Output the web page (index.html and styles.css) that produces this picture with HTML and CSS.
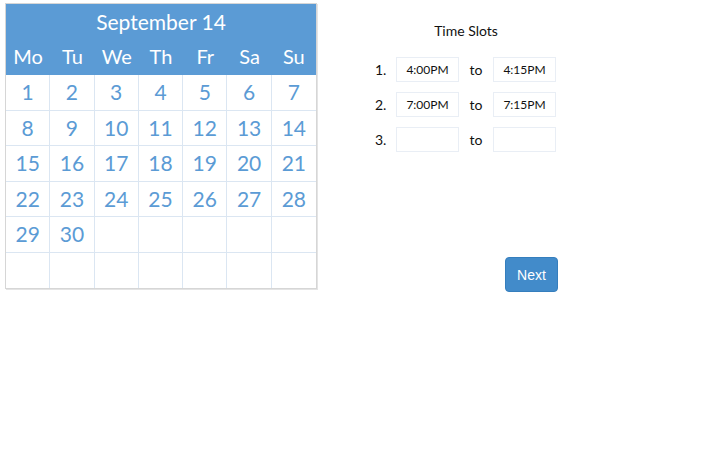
FILE: index.html
```html
<!DOCTYPE html>
<html>
<head>
<meta charset="utf-8">
<link rel="stylesheet" href="styles.css">
</head>
<body>
<div class="page">
  <div class="calendar">
    <div class="cal-head">
      <div class="cal-title">September 14</div>
      <div class="cal-days">
        <span>Mo</span><span>Tu</span><span>We</span><span>Th</span><span>Fr</span><span>Sa</span><span>Su</span>
      </div>
    </div>
    <div class="cal-grid">
      <div class="cell">1</div><div class="cell">2</div><div class="cell">3</div><div class="cell">4</div><div class="cell">5</div><div class="cell">6</div><div class="cell">7</div>
      <div class="cell">8</div><div class="cell">9</div><div class="cell">10</div><div class="cell">11</div><div class="cell">12</div><div class="cell">13</div><div class="cell">14</div>
      <div class="cell">15</div><div class="cell">16</div><div class="cell">17</div><div class="cell">18</div><div class="cell">19</div><div class="cell">20</div><div class="cell">21</div>
      <div class="cell">22</div><div class="cell">23</div><div class="cell">24</div><div class="cell">25</div><div class="cell">26</div><div class="cell">27</div><div class="cell">28</div>
      <div class="cell">29</div><div class="cell">30</div><div class="cell"></div><div class="cell"></div><div class="cell"></div><div class="cell"></div><div class="cell"></div>
      <div class="cell last"></div><div class="cell last"></div><div class="cell last"></div><div class="cell last"></div><div class="cell last"></div><div class="cell last"></div><div class="cell last"></div>
    </div>
  </div>

  <div class="slots">
    <div class="slots-title">Time Slots</div>
    <div class="slot-row first">
      <span class="slot-num">1.</span>
      <div class="slot-box">4:00PM</div>
      <span class="slot-to">to</span>
      <div class="slot-box">4:15PM</div>
    </div>
    <div class="slot-row">
      <span class="slot-num">2.</span>
      <div class="slot-box">7:00PM</div>
      <span class="slot-to">to</span>
      <div class="slot-box">7:15PM</div>
    </div>
    <div class="slot-row">
      <span class="slot-num">3.</span>
      <div class="slot-box"></div>
      <span class="slot-to">to</span>
      <div class="slot-box"></div>
    </div>
    <button class="next-btn">Next</button>
  </div>
</div>
</body>
</html>
```

FILE: styles.css
```css
* { box-sizing: border-box; }

body {
  margin: 0;
  background: #ffffff;
  font-family: "Lato", "Open Sans", sans-serif;
}

.page {
  display: flex;
  align-items: flex-start;
}

.calendar {
  margin: 3px 0 0 5px;
  width: 312px;
  border: 1px solid #d6d6d6;
  box-shadow: 1px 1px 0 #e4e4e4;
  background: #ffffff;
}

.cal-head {
  background: #5b9bd5;
  color: #ffffff;
}

.cal-title {
  height: 34px;
  display: flex;
  align-items: center;
  justify-content: center;
  font-size: 21px;
  padding-top: 1px;
}

.cal-days {
  height: 37px;
  display: grid;
  grid-template-columns: repeat(7, 1fr);
  align-items: center;
  font-size: 20px;
}

.cal-days span {
  text-align: center;
  padding-bottom: 2px;
}

.cal-grid {
  display: grid;
  grid-template-columns: repeat(7, 1fr);
  grid-auto-rows: 35.5px;
}

.cell {
  border-right: 1px solid #dbe6f2;
  border-bottom: 1px solid #dbe6f2;
  display: flex;
  align-items: center;
  justify-content: center;
  color: #5b9bd5;
  font-size: 21px;
  padding-bottom: 1px;
}

.cell:nth-child(7n) { border-right: none; }
.cell.last { border-bottom: none; }

.slots {
  margin-left: 53px;
  width: 192px;
  display: flex;
  flex-direction: column;
  color: #111111;
}

.slots-title {
  text-align: center;
  font-size: 14px;
  margin-top: 22px;
  height: 18px;
  line-height: 18px;
}

.slot-row {
  display: flex;
  align-items: center;
  height: 25px;
  margin-top: 10px;
}

.slot-row.first { margin-top: 17px; }

.slot-num {
  width: 26px;
  padding-left: 5px;
  font-size: 14px;
}

.slot-box {
  width: 63px;
  height: 25px;
  border: 1px solid #e9eef5;
  display: flex;
  align-items: center;
  justify-content: center;
  font-size: 12px;
  color: #111111;
}

.slot-to {
  width: 34px;
  text-align: center;
  font-size: 14px;
}

.next-btn {
  align-self: flex-start;
  margin-left: 135px;
  margin-top: 105px;
  width: 53px;
  height: 35px;
  background: #428bca;
  border: 1px solid #357ebd;
  border-radius: 4px;
  color: #ffffff;
  font-family: "Liberation Sans", Arial, sans-serif;
  font-size: 14px;
  padding: 0;
}
```
